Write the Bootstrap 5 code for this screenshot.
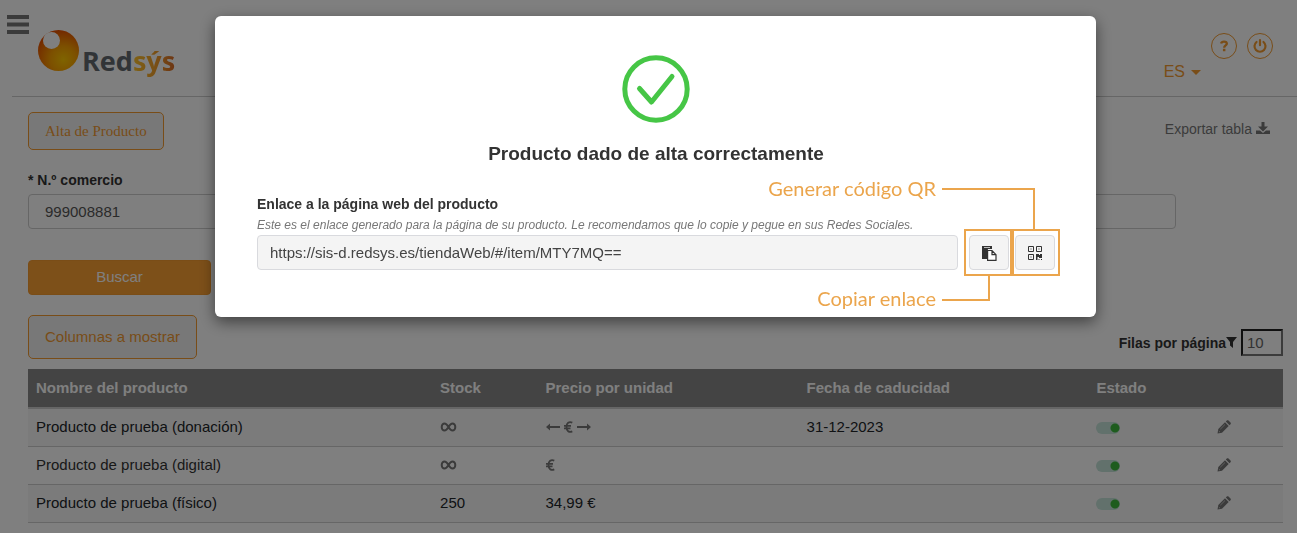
<!DOCTYPE html>
<html lang="es">
<head>
<meta charset="utf-8">
<meta name="viewport" content="width=device-width, initial-scale=1">
<title>Redsys - Productos</title>
<link href="https://cdn.jsdelivr.net/npm/bootstrap@5.3.0/dist/css/bootstrap.min.css" rel="stylesheet">
<style>
  :root { --brand: #f29a30; --ink: #333; --note: #eba54c; }
  body { font-family: "Liberation Sans", Arial, sans-serif; font-size: 15px; line-height: 20px; color: var(--ink); background: #fff; overflow: hidden; }
  svg { display: block; }
  .topbar { height: 97px; margin-left: 12px; border-bottom: 1px solid #ccc; }
  .menu-btn { width: 24px; margin: 14px 0 0 -6px; }
  .logo { margin: 29px 0 0 8px; }
  .logo-text { font: 700 27px/32px "Open Sans", "Noto Sans", sans-serif; color: #63696e; margin: 16px 0 0 2px; }
  .logo-text span { background: linear-gradient(90deg, #ffc42a, #f09a2a 60%, #d96a28); -webkit-background-clip: text; background-clip: text; color: transparent; }
  .round-btn { width: 26px; height: 26px; border: 1px solid var(--brand); border-radius: 50%; color: var(--brand); }
  .tools { margin: 33px 24px 0 0; gap: 10px; }
  .lang { color: var(--brand); font-size: 16px; margin: 62px 10px 0 0; line-height: 20px; }
  .lang::after { margin-left: 6px; border-width: 5px 5px 0; vertical-align: 2px; }
  .page { padding: 15px 14px 0 28px; }
  .btn-line { --bs-btn-color: var(--brand); --bs-btn-border-color: var(--brand); --bs-btn-bg: #f0f0f0; --bs-btn-font-size: 15px; --bs-btn-border-radius: 5px; line-height: 20px; padding: 8px 16px; }
  .btn-serif { font-family: "Liberation Serif", "Times New Roman", serif; }
  .btn-tall { padding: 11px 16px; }
  .btn-search { --bs-btn-bg: #fba033; --bs-btn-border-color: #f59a2e; --bs-btn-color: #fff; --bs-btn-font-size: 15px; width: 183px; height: 35px; padding: 0; margin: 31px 0 20px; border-radius: 4px; }
  .lbl { font-weight: 700; font-size: 14px; line-height: 20px; }
  .field { height: 35px; max-width: 1148px; width: 92%; padding: 0 16px; font-size: 15px; color: #555; border-color: #ccc; border-radius: 4px; }
  .export { color: #777; font-size: 14px; margin: 7px 13px 0 0; }
  .page-size { margin-bottom: 3px; }
  .rows-input { width: 42px; height: 27px; padding: 0 4px; border: 2px inset #767676; font-size: 15px; color: #666; background: #fff; }
  .products { --bs-table-striped-bg: #f7f7f7; table-layout: fixed; margin: 10px 0 0; font-size: 15px; border-color: #ccc; }
  .products th { background: #888; color: #fff; height: 39px; padding: 0 8px; vertical-align: middle; border-bottom: 2px solid #ccc; }
  .products td { height: 38px; padding: 0 8px; vertical-align: middle; color: var(--ink); }
  .products svg { color: #777; }
  .state { appearance: none; display: block; width: 24px; height: 12px; margin: 2px 0 0; border-radius: 6px; background: radial-gradient(circle at 19px 6px, #3cb83c 0 4px, transparent 5px), #c4e2d9; }
  .dialog-area { padding-left: 14px; overflow: hidden; }
  .dialog-box { max-width: 881px; margin: 16px auto; }
  .dialog-box .modal-content { border: 0; border-radius: 6px; box-shadow: 0 5px 15px rgba(0,0,0,.5); padding: 39px 41px 47px 42px; color: var(--ink); }
  .modal-backdrop.show { opacity: .5; }
  .dialog-title { font-size: 19px; line-height: 24px; font-weight: 700; margin: 19px 0 28px; }
  .hint { font-size: 12px; line-height: 16px; color: #777; font-style: italic; margin: 3px 0 2px; }
  .link-field { height: 35px; padding: 0 12px; font-size: 15px; color: #444; background: #f4f4f4; border-color: #d9dade; border-radius: 4px; margin-right: 11px; }
  .tool-btn { width: 40px; height: 35px; border: 1px solid #d9dade; border-radius: 4px; background: #f4f4f4; color: #333; }
  .tool-group { gap: 6px; }
  .marked::before { content: ""; position: absolute; inset: -6px -5px; border: 2px solid var(--note); pointer-events: none; }
  .callout-line { position: absolute; border: 0 solid var(--note); }
  .line-qr { left: -73px; bottom: 40px; width: 93px; height: 42px; border-width: 2px 2px 0 0; }
  .line-copy { left: -27px; top: 40px; width: 48px; height: 26px; border-width: 0 2px 2px 0; }
  .callout-text { position: absolute; font: 20px/24px Lato, sans-serif; color: var(--note); white-space: nowrap; }
  .text-qr { right: 119px; bottom: 70px; }
  .text-copy { right: 73px; top: 51px; }
</style>
</head>
<body>
<svg width="0" height="0" class="position-absolute" aria-hidden="true">
  <symbol id="pencil" viewBox="0 0 14 14"><path fill="currentColor" d="M.5 13.500l.8-4.500L8 2.300l3.700 3.700L5 12.700zM8.800 1.500l1-1c.5-.5 1.200-.5 1.700 0l2 2c.5.5.5 1.200 0 1.700l-1 1z"/><path stroke="#ddd" stroke-width=".7" d="M3.300 9.200l4.700-4.700M1.800 11l1.200 1.200"/></symbol>
  <symbol id="infinity" viewBox="0 0 16 10"><path fill="none" stroke="currentColor" stroke-width="2" d="M8 5C6.500 2.500 5.500 1.500 4 1.500S1.200 3 1.200 5 2.500 8.500 4 8.500 6.500 7.500 8 5s2.500-3.500 4-3.500S14.800 3 14.800 5 13.500 8.500 12 8.500 9.500 7.500 8 5z"/></symbol>
  <symbol id="euro" viewBox="0 0 9 12"><path fill="none" stroke="currentColor" stroke-width="1.800" d="M8.300 1.600C5 .2 2.500 2 2.500 6s2.500 5.800 5.800 4.400M0 4.900h7M0 7.300h6.500"/></symbol>
</svg>

<header class="topbar d-flex align-items-start">
  <button class="menu-btn btn p-0 border-0" aria-label="Menú"><svg width="24" height="21" viewBox="0 0 24 21"><path stroke="#777" stroke-width="4" d="M1 3h22M1 10.500h22M1 18h22"/></svg></button>
  <a href="#" class="logo d-flex align-items-start text-decoration-none" aria-label="Redsýs">
    <svg width="42" height="44" viewBox="0 0 42 44"><defs><radialGradient id="orb" cx=".62" cy=".72" r=".72"><stop offset="0" stop-color="#ffc800"/><stop offset=".45" stop-color="#f9a000"/><stop offset="1" stop-color="#e65100"/></radialGradient></defs><circle cx="20.500" cy="21.500" r="20.500" fill="url(#orb)"/><circle cx="13.500" cy="11.500" r="8.500" fill="#fff"/></svg>
    <div class="logo-text">Red<span>sýs</span></div>
  </a>
  <div class="ms-auto d-flex align-items-start">
    <button class="lang btn p-0 border-0 dropdown-toggle">ES</button>
    <div class="tools d-flex">
      <button class="round-btn btn p-0" aria-label="Ayuda"><svg class="mx-auto" width="10" height="12" viewBox="0 0 12 14"><path fill="none" stroke="currentColor" stroke-width="2.800" d="M2.500 4C3 2.200 4.200 1.700 6 1.700c2.200 0 3.400 1.100 3.400 2.600C9.400 6.300 6.200 6.400 6.200 9"/><path fill="currentColor" d="M4.700 10.300h3v3h-3z"/></svg></button>
      <button class="round-btn btn p-0" aria-label="Salir"><svg class="mx-auto" width="14" height="14" viewBox="0 0 14 14"><path fill="none" stroke="currentColor" stroke-width="2.200" stroke-linecap="round" d="M3.500 3a5.500 5.500 0 1 0 7 0M7 1.200v5"/></svg></button>
    </div>
  </div>
</header>

<main class="page">
  <div class="d-flex justify-content-between align-items-start">
    <button class="btn btn-line btn-serif">Alta de Producto</button>
    <a href="#" class="export d-flex gap-1 text-decoration-none">Exportar tabla
      <svg width="14" height="16" viewBox="0 0 14 16"><path fill="currentColor" d="M5.500 3h3v4.500H12l-5 5-5-5h3.500zM0 11.500h4l3 2.500 3-2.500h4V15H0z"/></svg></a>
  </div>
  <div class="mt-3 pt-1">
    <label class="lbl d-block mb-1" for="comercio">* N.º comercio</label>
    <input id="comercio" class="field form-control" type="text" value="999008881">
  </div>
  <button class="btn btn-search d-block">Buscar</button>
  <div class="d-flex justify-content-between align-items-end">
    <button class="btn btn-line btn-tall">Columnas a mostrar</button>
    <div class="page-size d-flex align-items-center">
      <label class="lbl" for="filas">Filas por página</label>
      <svg width="11" height="11" viewBox="0 0 11 11" class="me-1"><path fill="#333" d="M0 0h11L7 5v6L4 8.500V5z"/></svg>
      <input id="filas" class="rows-input" type="text" value="10">
    </div>
  </div>
  <table class="products table table-striped">
    <colgroup><col style="width:32.200%"><col style="width:8.400%"><col style="width:20.800%"><col style="width:23.100%"><col style="width:9.600%"><col></colgroup>
    <thead><tr><th>Nombre del producto</th><th>Stock</th><th>Precio por unidad</th><th>Fecha de caducidad</th><th>Estado</th><th></th></tr></thead>
    <tbody>
      <tr><td>Producto de prueba (donación)</td><td><svg width="17" height="10"><use href="#infinity"/></svg></td>
        <td><div class="d-flex align-items-center gap-1"><svg width="14" height="8" viewBox="0 0 14 8"><path fill="currentColor" d="M0 4l4-3.500V3h10v2H4v2.500z"/></svg><svg width="9" height="12"><use href="#euro"/></svg><svg width="14" height="8" viewBox="0 0 14 8"><path fill="currentColor" d="M14 4l-4-3.500V3H0v2h10v2.500z"/></svg></div></td>
        <td>31-12-2023</td><td><input class="state" type="checkbox" checked aria-label="Estado"></td><td><a href="#" aria-label="Editar"><svg width="14" height="14"><use href="#pencil"/></svg></a></td></tr>
      <tr><td>Producto de prueba (digital)</td><td><svg width="17" height="10"><use href="#infinity"/></svg></td><td><svg width="9" height="12"><use href="#euro"/></svg></td>
        <td></td><td><input class="state" type="checkbox" checked aria-label="Estado"></td><td><a href="#" aria-label="Editar"><svg width="14" height="14"><use href="#pencil"/></svg></a></td></tr>
      <tr><td>Producto de prueba (físico)</td><td>250</td><td>34,99 €</td>
        <td></td><td><input class="state" type="checkbox" checked aria-label="Estado"></td><td><a href="#" aria-label="Editar"><svg width="14" height="14"><use href="#pencil"/></svg></a></td></tr>
    </tbody>
  </table>
</main>

<div class="modal-backdrop show"></div>
<div class="dialog-area modal show d-block" role="dialog" aria-labelledby="titulo">
  <div class="dialog-box modal-dialog">
    <div class="modal-content">
      <svg class="mx-auto" width="68" height="68" viewBox="0 0 68 68"><g fill="none" stroke="#46c646" stroke-width="5" stroke-linecap="round" stroke-linejoin="round"><circle cx="34" cy="34" r="31.200"/><path d="M17.500 33.500L29.500 47 50 21.500"/></g></svg>
      <h1 id="titulo" class="dialog-title text-center">Producto dado de alta correctamente</h1>
      <label class="lbl" for="enlace">Enlace a la página web del producto</label>
      <p class="hint">Este es el enlace generado para la página de su producto. Le recomendamos que lo copie y pegue en sus Redes Sociales.</p>
      <div class="d-flex">
        <input id="enlace" class="link-field form-control" type="text" value="https://sis-d.redsys.es/tiendaWeb/#/item/MTY7MQ==" readonly>
        <div class="tool-group d-flex">
          <div class="marked position-relative">
            <button class="tool-btn btn p-0" aria-label="Copiar enlace"><svg class="mx-auto" width="16" height="16" viewBox="0 0 16 16"><path fill="currentColor" d="M1 1h10v3H7L6 8v6H1z"/><path fill="#bbb" d="M3 2h6v1H3z"/><path fill="#fff" stroke="currentColor" stroke-width="1.200" d="M6.600 5.500H11l4 4.200v5.600H6.600zM11 5.500v4.200h4"/></svg></button>
            <span class="callout-line line-copy"></span><span class="callout-text text-copy">Copiar enlace</span>
          </div>
          <div class="marked position-relative">
            <button class="tool-btn btn p-0" aria-label="Generar código QR"><svg class="mx-auto" width="14" height="14" viewBox="0 0 14 14"><g fill="none" stroke="currentColor"><path d="M.5.500h5v5h-5zM8.500.500h5v5h-5zM.5 8.500h5v5h-5z"/></g><path fill="currentColor" d="M2.500 2.500h1v1h-1zM10.500 2.500h1v1h-1zM2.500 10.500h1v1h-1zM8 8h3v1h1V8h2v4h-3v-1H9.500v3H8zM10.500 13h1v1h-1zM13 13h1v1h-1z"/></svg></button>
            <span class="callout-line line-qr"></span><span class="callout-text text-qr">Generar código QR</span>
          </div>
        </div>
      </div>
    </div>
  </div>
</div>
<script src="https://cdn.jsdelivr.net/npm/bootstrap@5.3.0/dist/js/bootstrap.bundle.min.js"></script>
</body>
</html>
